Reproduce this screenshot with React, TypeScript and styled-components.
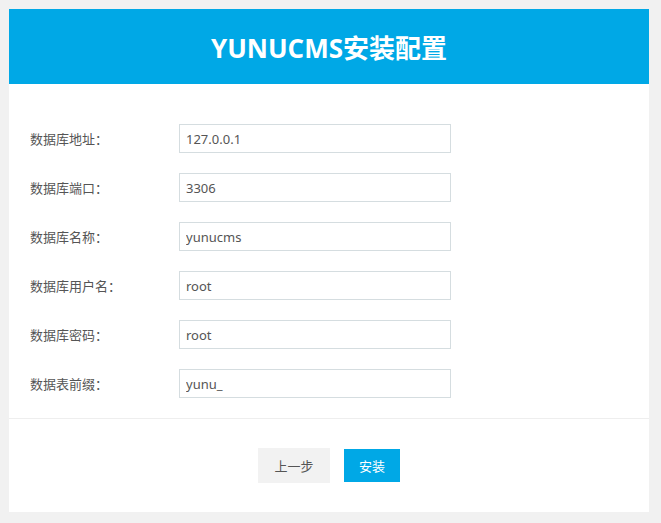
import React from 'react';
import styled, { createGlobalStyle } from 'styled-components';

const GlobalStyle = createGlobalStyle`
    html, body {
        margin: 0;
        padding: 0;
        background: #f1f1f1;
    }
    body {
        padding: 9px 12px 11px 9px;
        font-family: "Noto Sans", "Noto Sans CJK SC", sans-serif;
        color: #555;
    }
`;

const Card = styled.div`
    width: 640px;
    background: #fff;
`;

const Header = styled.div`
    height: 75px;
    background: #00a8e6;
    display: flex;
    align-items: center;
    justify-content: center;
    color: #fff;
    font-size: 26px;
    font-weight: bold;
    font-family: "Open Sans", "Noto Sans CJK SC", sans-serif;
`;

const Form = styled.div`
    padding: 40px 0 20px 21px;
    display: flex;
    flex-direction: column;
    gap: 20px;
    border-bottom: 1px solid #eee;
`;

const Row = styled.div`
    display: flex;
    align-items: center;
    height: 29px;
`;

const Label = styled.label`
    width: 149px;
    font-size: 13px;
    color: #555;
`;

const Input = styled.input`
    box-sizing: border-box;
    width: 272px;
    height: 29px;
    border: 1px solid #d5dde0;
    padding: 0 6px;
    font-size: 13px;
    font-family: "Noto Sans", "Noto Sans CJK SC", sans-serif;
    color: #555;
    outline: none;
`;

const Footer = styled.div`
    height: 93px;
    display: flex;
    justify-content: center;
    align-items: center;
    gap: 14px;
`;

const Button = styled.button<{ primary?: boolean }>`
    border: none;
    height: ${(p) => (p.primary ? '33px' : '35px')};
    width: ${(p) => (p.primary ? '56px' : '72px')};
    background: ${(p) => (p.primary ? '#00a8e6' : '#f2f2f2')};
    color: ${(p) => (p.primary ? '#fff' : '#555')};
    font-size: 13px;
    font-family: "Noto Sans CJK SC", sans-serif;
    cursor: pointer;
`;

const fields = [
    { label: '数据库地址：', value: '127.0.0.1' },
    { label: '数据库端口：', value: '3306' },
    { label: '数据库名称：', value: 'yunucms' },
    { label: '数据库用户名：', value: 'root' },
    { label: '数据库密码：', value: 'root' },
    { label: '数据表前缀：', value: 'yunu_' },
];

export default function App() {
    return (
        <>
            <GlobalStyle />
            <Card>
                <Header>YUNUCMS安装配置</Header>
                <Form>
                    {fields.map((f) => (
                        <Row key={f.label}>
                            <Label>{f.label}</Label>
                            <Input defaultValue={f.value} />
                        </Row>
                    ))}
                </Form>
                <Footer>
                    <Button>上一步</Button>
                    <Button primary>安装</Button>
                </Footer>
            </Card>
        </>
    );
}
